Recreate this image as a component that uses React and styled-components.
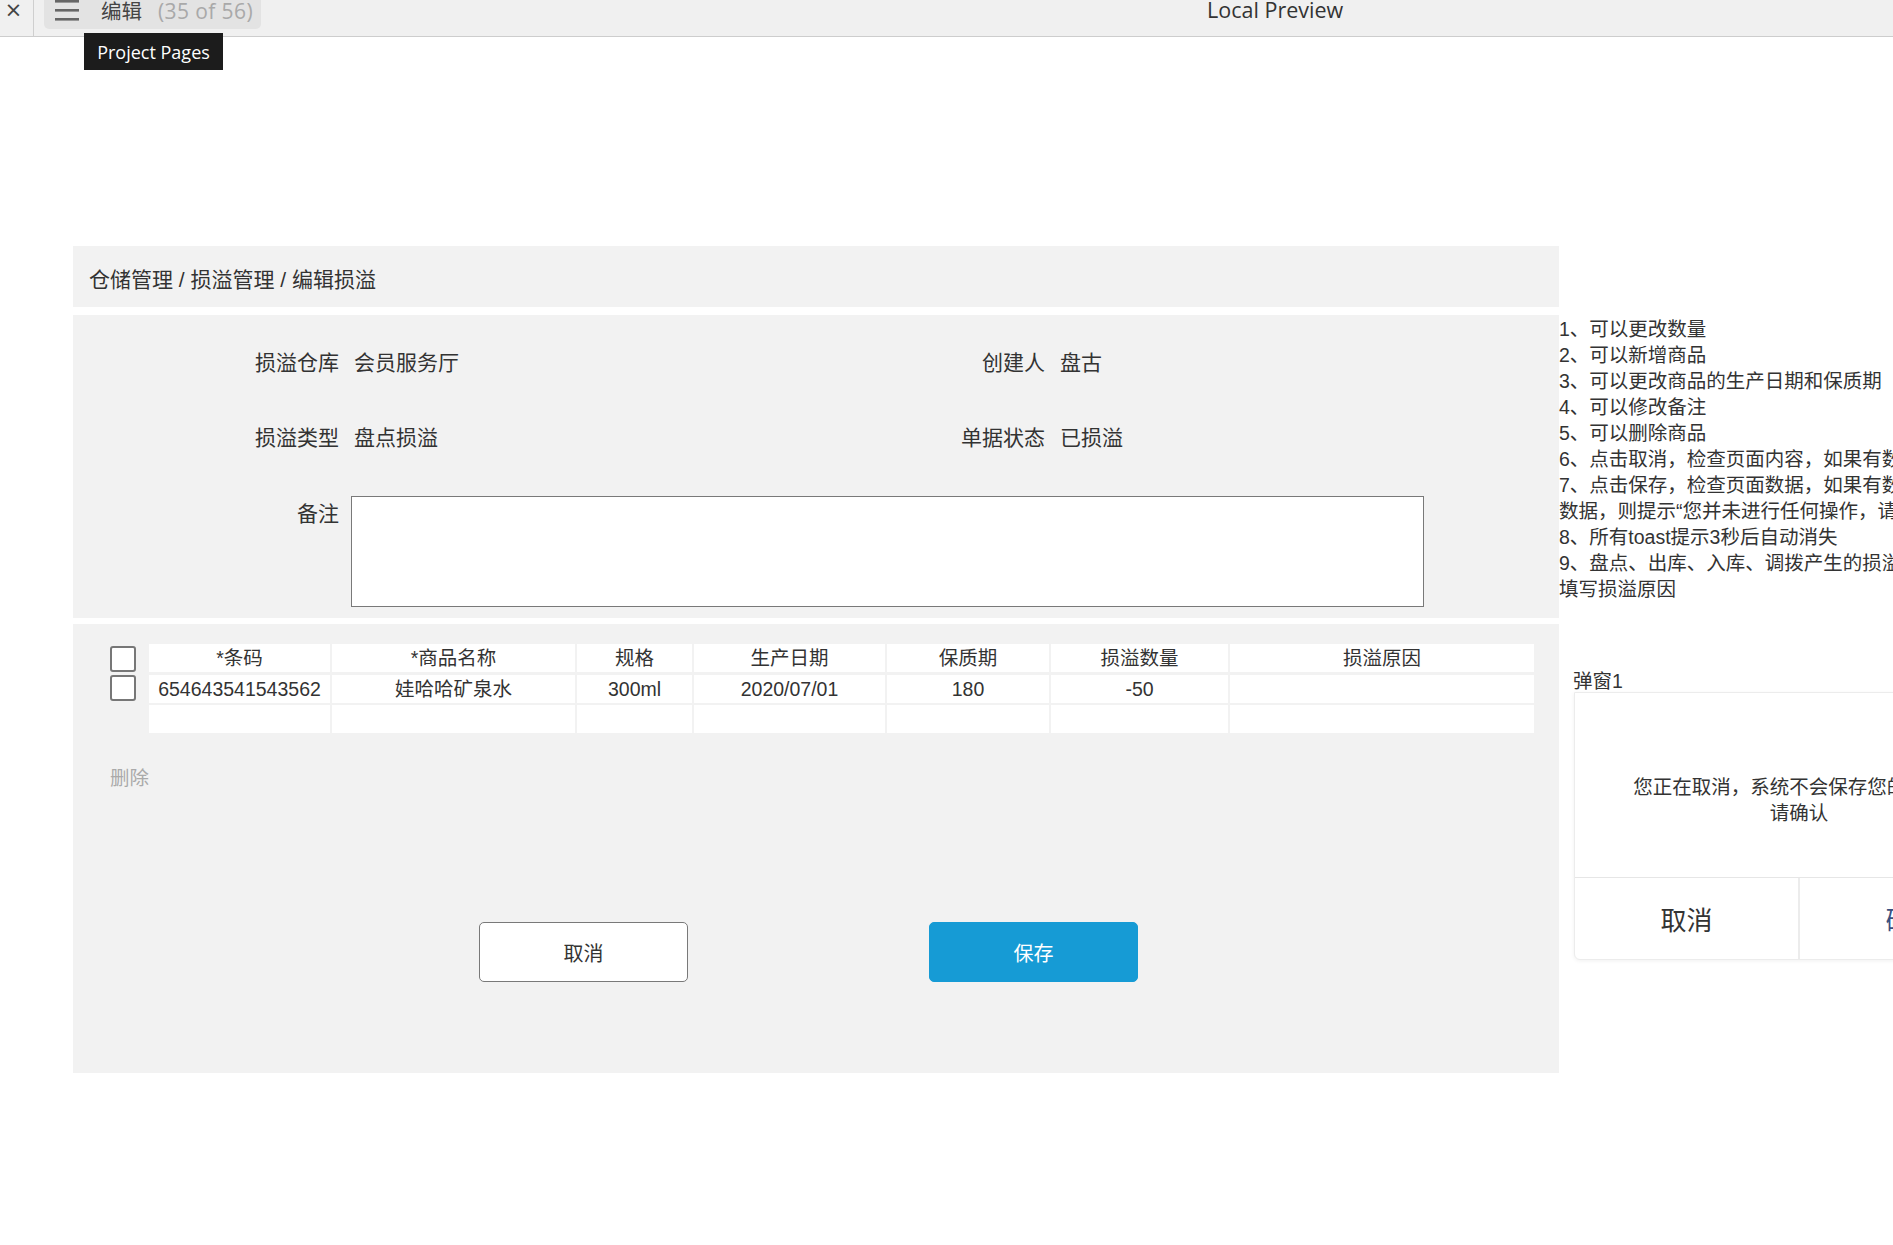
import React from "react";
import styled, { createGlobalStyle } from "styled-components";

const Global = createGlobalStyle`
  html, body { margin: 0; padding: 0; background: #ffffff; }
  body {
    width: 1893px;
    height: 1245px;
    overflow: hidden;
    font-family: "Liberation Sans", "Noto Sans CJK SC", sans-serif;
    color: #333333;
  }
  * { box-sizing: border-box; }
`;

const TopBar = styled.div`
  position: relative;
  display: flex;
  align-items: flex-start;
  height: 37px;
  background: #f0f0f0;
  border-bottom: 1px solid #cdcdcd;
  font-family: "Open Sans", "Noto Sans CJK SC", sans-serif;
`;

const CloseBtn = styled.div`
  width: 34px;
  height: 36px;
  border-right: 1px solid #cfcfcf;
  display: flex;
  justify-content: center;
  padding-right: 6px;
  font-size: 27px;
  line-height: 19px;
  color: #444;
`;

const PageTab = styled.div`
  margin-left: 10px;
  height: 29px;
  padding: 0 8px 0 11px;
  display: flex;
  align-items: flex-start;
  background: #e3e3e3;
  border-radius: 0 0 5px 5px;
`;

const TabTitle = styled.span`
  margin-left: 22px;
  font-size: 20.5px;
  line-height: 22px;
  color: #444;
`;

const TabCount = styled.span`
  margin-left: 16px;
  font-size: 21px;
  line-height: 22px;
  color: #a9a9a9;
  letter-spacing: 0.4px;
`;

const PreviewTitle = styled.div`
  margin-left: 946px;
  font-size: 21.5px;
  line-height: 20px;
  color: #333;
`;

const Tooltip = styled.div`
  position: absolute;
  left: 84px;
  top: 33px;
  width: 139px;
  height: 37px;
  background: #1c1c1c;
  color: #ffffff;
  font-size: 18px;
  display: flex;
  align-items: center;
  justify-content: center;
  z-index: 5;
`;

const Main = styled.div`
  display: flex;
  align-items: flex-start;
  padding: 209px 0 0 73px;
  width: max-content;
`;

const LeftCol = styled.div`
  width: 1486px;
  flex-shrink: 0;
  display: flex;
  flex-direction: column;
`;

const Breadcrumb = styled.div`
  height: 61px;
  background: #f2f2f2;
  display: flex;
  align-items: center;
  padding: 3px 0 0 16px;
  font-size: 21px;
  color: #333;
`;

const FormPanel = styled.div`
  margin-top: 8px;
  height: 303px;
  background: #f2f2f2;
  padding-top: 33px;
  display: flex;
  flex-direction: column;
`;

const FieldRow = styled.div`
  display: flex;
  margin-bottom: ${(p) => p.$gap || 0}px;
`;

const Field = styled.div`
  width: 706px;
  display: flex;
  align-items: flex-start;
`;

const Label = styled.div`
  width: 266px;
  text-align: right;
  font-size: 21px;
  line-height: 30px;
  margin-top: ${(p) => p.$top || 0}px;
  color: #333;
`;

const Value = styled.div`
  margin-left: ${(p) => p.$gap || 15}px;
  font-size: 21px;
  line-height: 30px;
  color: #333;
`;

const Remarks = styled.textarea`
  margin-left: 12px;
  width: 1073px;
  height: 111px;
  border: 1px solid #797979;
  background: #ffffff;
  resize: none;
  outline: none;
  padding: 0;
`;

const TablePanel = styled.div`
  margin-top: 6px;
  height: 449px;
  background: #f2f2f2;
  padding: 20px 25px 0 37px;
  display: flex;
  flex-direction: column;
`;

const TableWrap = styled.div`
  display: flex;
  align-items: flex-start;
`;

const CheckCol = styled.div`
  width: 39px;
  display: flex;
  flex-direction: column;
  gap: 3px;
  padding-top: 2px;
`;

const CheckBox = styled.span`
  display: block;
  width: 26px;
  height: 26px;
  border: 2.5px solid #777777;
  border-radius: 3px;
  background: #ffffff;
`;

const Grid = styled.div`
  display: grid;
  grid-template-columns: 181px 243px 115px 191px 162px 177px 304px;
  grid-auto-rows: 28px;
  column-gap: 2px;
  row-gap: 2.5px;
`;

const Cell = styled.div`
  background: #ffffff;
  text-align: center;
  font-size: 19.5px;
  line-height: 28px;
  color: #333;
  white-space: nowrap;
`;

const DeleteLink = styled.div`
  margin-top: 30px;
  font-size: 19.5px;
  line-height: 30px;
  color: #aaaaaa;
`;

const ButtonRow = styled.div`
  margin-top: 129px;
  margin-left: 369px;
  display: flex;
  gap: 241px;
`;

const Button = styled.div`
  width: 209px;
  height: 60px;
  border-radius: 5px;
  display: flex;
  align-items: center;
  justify-content: center;
  font-size: 20px;
  background: ${(p) => (p.$primary ? "#169bd5" : "#ffffff")};
  color: ${(p) => (p.$primary ? "#ffffff" : "#333333")};
  border: 1px solid ${(p) => (p.$primary ? "#169bd5" : "#797979")};
`;

const RightCol = styled.div`
  width: 470px;
  flex-shrink: 0;
  margin-top: 70px;
  display: flex;
  flex-direction: column;
`;

const Notes = styled.div`
  padding-left: 0;
  font-size: 19.5px;
  line-height: 26px;
  color: #333;
`;

const NoteLine = styled.div`
  white-space: nowrap;
`;

const PopupLabel = styled.div`
  margin-top: 68px;
  padding-left: 14px;
  font-size: 19.5px;
  line-height: 22px;
  color: #333;
`;

const Popup = styled.div`
  margin-left: 15px;
  width: 450px;
  height: 268px;
  border: 1px solid #ececec;
  border-radius: 0 0 6px 6px;
  box-shadow: 0 1px 4px rgba(0, 0, 0, 0.06);
  background: #ffffff;
  display: flex;
  flex-direction: column;
`;

const PopupBody = styled.div`
  height: 185px;
  padding-top: 81px;
  text-align: center;
  font-size: 19.5px;
  line-height: 26px;
  color: #333;
  border-bottom: 1px solid #e6e6e6;
`;

const PopupFooter = styled.div`
  flex: 1;
  display: flex;
`;

const PopupBtn = styled.div`
  flex: 1;
  display: flex;
  align-items: center;
  justify-content: center;
  font-size: 26px;
  color: ${(p) => (p.$confirm ? "#3a5080" : "#333333")};
  & + & {
    border-left: 2px solid #ececec;
  }
`;

const Hamburger = () => (
  <svg width="24" height="22" viewBox="0 0 24 22" style={{ display: "block" }}>
    <g stroke="#666" strokeWidth="2.6" strokeLinecap="butt">
      <line x1="0" y1="1.3" x2="24" y2="1.3" />
      <line x1="0" y1="10.3" x2="24" y2="10.3" />
      <line x1="0" y1="19.3" x2="24" y2="19.3" />
    </g>
  </svg>
);

const headers = ["*条码", "*商品名称", "规格", "生产日期", "保质期", "损溢数量", "损溢原因"];
const rows = [
  ["654643541543562", "娃哈哈矿泉水", "300ml", "2020/07/01", "180", "-50", ""],
  ["", "", "", "", "", "", ""],
];

const notes = [
  "1、可以更改数量",
  "2、可以新增商品",
  "3、可以更改商品的生产日期和保质期",
  "4、可以修改备注",
  "5、可以删除商品",
  "6、点击取消，检查页面内容，如果有数据变动，则弹出弹窗1",
  "7、点击保存，检查页面数据，如果有数据变动，则保存成功；如果没有变动",
  "数据，则提示“您并未进行任何操作，请确认”",
  "8、所有toast提示3秒后自动消失",
  "9、盘点、出库、入库、调拨产生的损溢单，不可删除商品，必须",
  "填写损溢原因",
];

export default function App() {
  return (
    <>
      <Global />
      <TopBar>
        <CloseBtn>×</CloseBtn>
        <PageTab>
          <Hamburger />
          <TabTitle>编辑</TabTitle>
          <TabCount>(35 of 56)</TabCount>
        </PageTab>
        <PreviewTitle>Local Preview</PreviewTitle>
        <Tooltip>Project Pages</Tooltip>
      </TopBar>
      <Main>
        <LeftCol>
          <Breadcrumb>仓储管理 / 损溢管理 / 编辑损溢</Breadcrumb>
          <FormPanel>
            <FieldRow $gap={45}>
              <Field>
                <Label>损溢仓库</Label>
                <Value>会员服务厅</Value>
              </Field>
              <Field>
                <Label>创建人</Label>
                <Value>盘古</Value>
              </Field>
            </FieldRow>
            <FieldRow $gap={43}>
              <Field>
                <Label>损溢类型</Label>
                <Value>盘点损溢</Value>
              </Field>
              <Field>
                <Label>单据状态</Label>
                <Value>已损溢</Value>
              </Field>
            </FieldRow>
            <FieldRow>
              <Label $top={3}>备注</Label>
              <Remarks />
            </FieldRow>
          </FormPanel>
          <TablePanel>
            <TableWrap>
              <CheckCol>
                <CheckBox />
                <CheckBox />
              </CheckCol>
              <Grid>
                {headers.map((h) => (
                  <Cell key={h}>{h}</Cell>
                ))}
                {rows.map((r, i) =>
                  r.map((c, j) => <Cell key={`${i}-${j}`}>{c}</Cell>)
                )}
              </Grid>
            </TableWrap>
            <DeleteLink>删除</DeleteLink>
            <ButtonRow>
              <Button>取消</Button>
              <Button $primary>保存</Button>
            </ButtonRow>
          </TablePanel>
        </LeftCol>
        <RightCol>
          <Notes>
            {notes.map((n, i) => (
              <NoteLine key={i}>{n}</NoteLine>
            ))}
          </Notes>
          <PopupLabel>弹窗1</PopupLabel>
          <Popup>
            <PopupBody>
              您正在取消，系统不会保存您的数据，
              <br />
              请确认
            </PopupBody>
            <PopupFooter>
              <PopupBtn>取消</PopupBtn>
              <PopupBtn $confirm>确认</PopupBtn>
            </PopupFooter>
          </Popup>
        </RightCol>
      </Main>
    </>
  );
}
